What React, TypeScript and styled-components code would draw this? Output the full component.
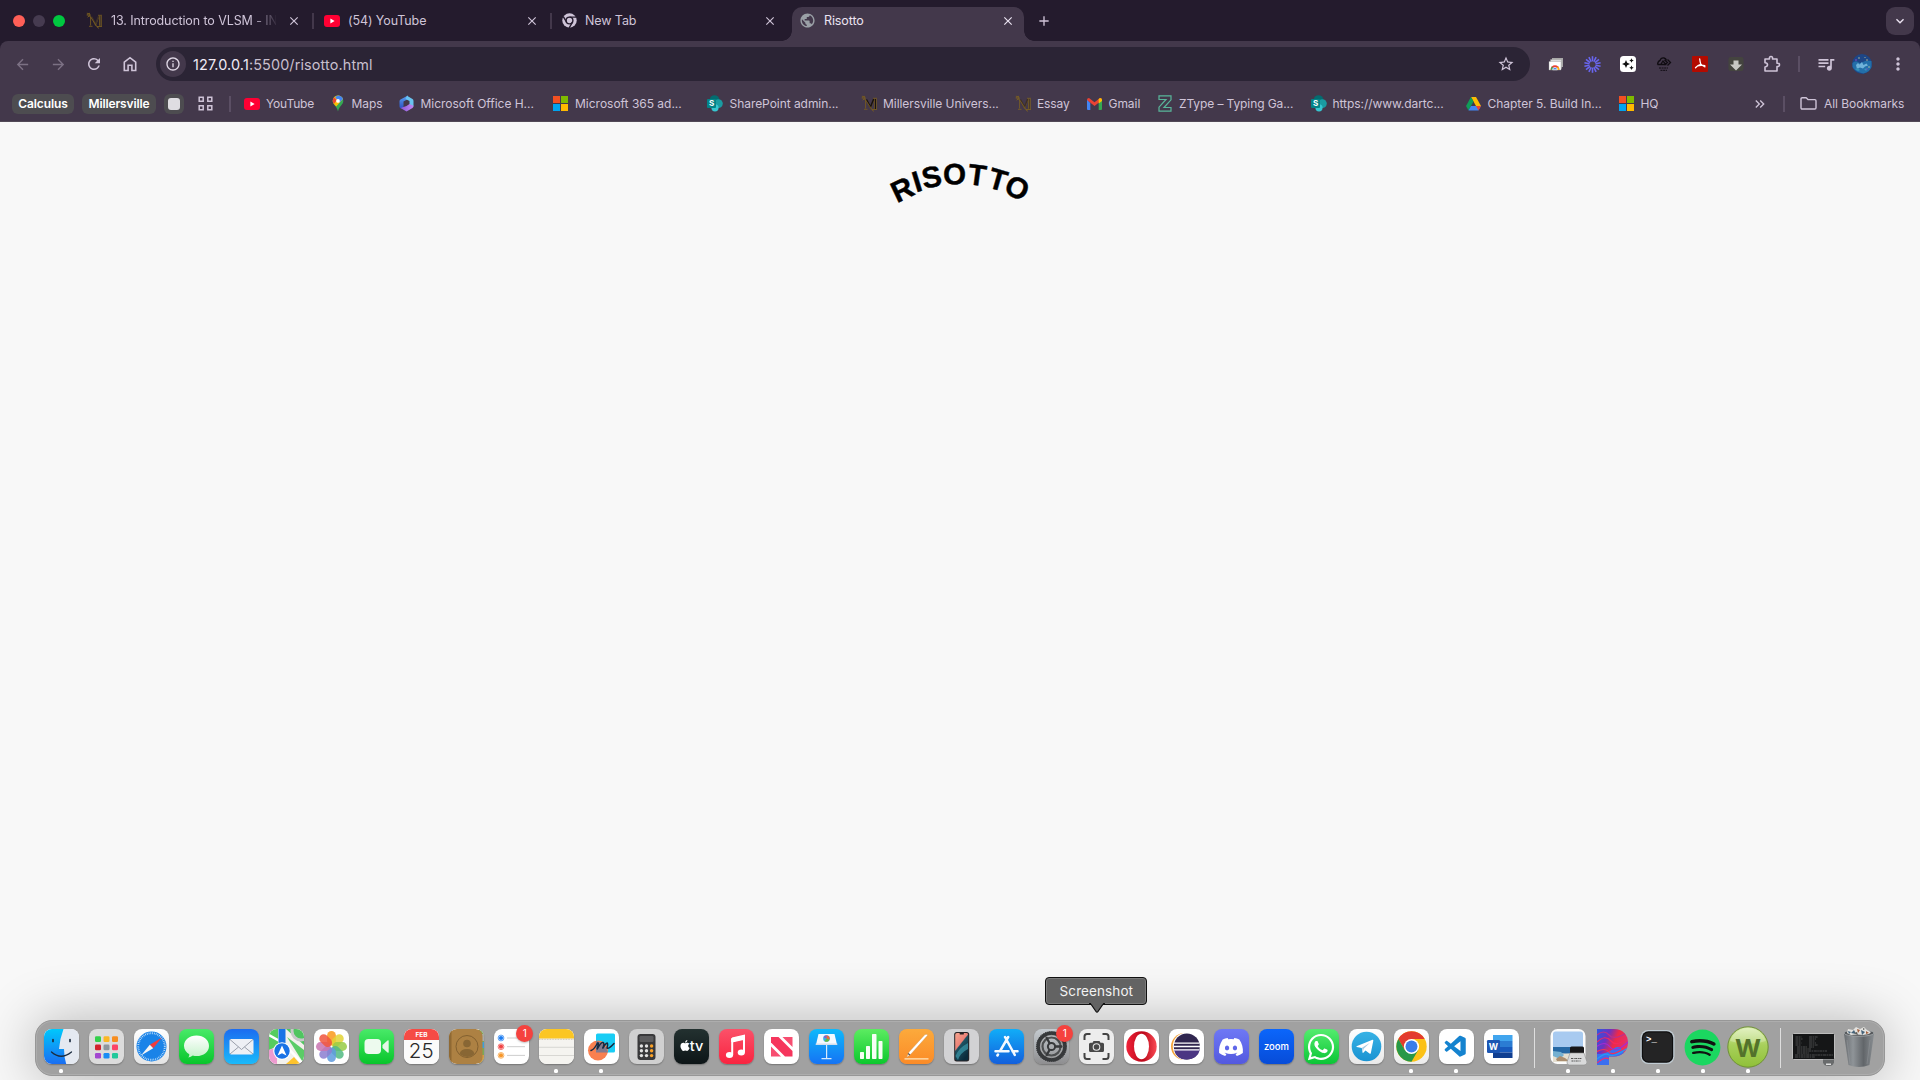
import React from "react";
import styled, { createGlobalStyle } from "styled-components";
import {
  MdArrowBack, MdArrowForward, MdRefresh, MdStarBorder,
  MdQueueMusic, MdMoreVert, MdInfoOutline, MdClose, MdAdd, MdPublic,
  MdKeyboardArrowDown, MdKeyboardDoubleArrowRight,
} from "react-icons/md";
import { FaApple, FaDiscord, FaWhatsapp, FaSpotify } from "react-icons/fa";
import { VscVscode } from "react-icons/vsc";

const Global = createGlobalStyle`
  * { box-sizing: border-box; }
  html, body { margin: 0; padding: 0; overflow: hidden; background: #f8f8f8; }
  svg { display: block; flex: none; }
`;

const Screen = styled.div`
  width: 1920px;
  height: 1080px;
  display: flex;
  flex-direction: column;
  overflow: hidden;
  background: #f8f8f8;
  font-family: Inter, "Liberation Sans", sans-serif;
`;

/* ---------- Browser chrome ---------- */
const TabStrip = styled.div`
  height: 41px;
  flex: none;
  display: flex;
  background: #241b2d;
`;
const Lights = styled.div`
  width: 75px;
  display: flex;
  align-items: center;
  gap: 8px;
  padding-left: 13px;
`;
const Light = styled.span<{ $c: string }>`
  width: 12px;
  height: 12px;
  border-radius: 50%;
  background: ${(p) => p.$c};
`;
const Tab = styled.div<{ $active?: boolean; $line?: boolean }>`
  width: ${(p) => (p.$active ? 232 : 238)}px;
  height: ${(p) => (p.$active ? 34 : 41)}px;
  margin: ${(p) => (p.$active ? "7px 3px 0 3px" : "0")};
  padding: ${(p) => (p.$active ? "0 9px 7px 7px" : "0 12px 0 11px")};
  position: relative;
  display: flex;
  align-items: center;
  gap: 8px;
  color: ${(p) => (p.$active ? "#ece4f2" : "#cfc4d8")};
  background: ${(p) => (p.$active ? "#43384b" : "transparent")};
  border-radius: 10px 10px 0 0;
  &::after {
    content: "";
    display: ${(p) => (p.$line ? "block" : "none")};
    position: absolute;
    right: -1px;
    top: 13px;
    width: 2px;
    height: 16px;
    background: #43384b;
  }
`;
const Flare = styled.i<{ $side: "left" | "right" }>`
  position: absolute;
  bottom: 0;
  ${(p) => p.$side}: -10px;
  width: 10px;
  height: 10px;
  background: radial-gradient(circle at ${(p) => (p.$side === "left" ? "0 0" : "100% 0")}, transparent 9.5px, #43384b 10px);
`;
const TabTitle = styled.span<{ $fade?: boolean }>`
  flex: 1;
  min-width: 0;
  font-size: 12.5px;
  line-height: 18px;
  letter-spacing: -0.1px;
  white-space: nowrap;
  margin-right: 3px;
  ${(p) => p.$fade && "mask-image: linear-gradient(to right, #000 140px, transparent 168px);"}
`;
const NewTab = styled.div`
  width: 34px;
  display: flex;
  align-items: center;
  justify-content: center;
  color: #cfc4d8;
`;
const TabSearch = styled.div`
  width: 28px;
  height: 28px;
  margin: 7px 6px 0 auto;
  border-radius: 9px;
  display: flex;
  align-items: center;
  justify-content: center;
  background: #43384b;
  color: #ece4f2;
`;
const ToolbarWrap = styled.div`
  flex: none;
  height: 81px;
  background: #241b2d;
`;
const ToolbarBody = styled.div`
  height: 81px;
  background: #43384b;
  border-radius: 8px 8px 0 0;
  border-bottom: 1px solid #524a57;
`;
const Toolbar = styled.div`
  height: 46px;
  display: flex;
  align-items: center;
  padding: 0 4px;
  color: #cfc4d8;
`;
const NavSlot = styled.div<{ $dim?: boolean }>`
  width: 36px;
  display: flex;
  justify-content: center;
  color: ${(p) => (p.$dim ? "#7c7184" : "#cfc4d8")};
`;
const Omnibox = styled.div`
  width: 1374px;
  height: 34px;
  margin-left: 8px;
  border-radius: 17px;
  padding: 0 15px 0 4px;
  display: flex;
  align-items: center;
  background: #2b2435;
`;
const InfoDot = styled.div`
  width: 26px;
  height: 26px;
  border-radius: 50%;
  display: flex;
  align-items: center;
  justify-content: center;
  background: #43384b;
  color: #e0d8e6;
`;
const Url = styled.div`
  flex: 1;
  margin-left: 7px;
  font-size: 14.4px;
  letter-spacing: 0.13px;
  color: #c8bfce;
  b { font-weight: 400; color: #f1ebf5; }
`;
const Extensions = styled.div`
  display: flex;
  align-items: center;
  margin-left: 8px;
`;
const VLine = styled.span<{ $w: number }>`
  width: ${(p) => p.$w}px;
  height: 16px;
  display: flex;
  justify-content: center;
  &::before { content: ""; width: 2px; height: 100%; background: #5b4f64; }
`;
const BookmarkBar = styled.div`
  height: 34px;
  display: flex;
  align-items: center;
  padding: 0 14px 1px 12px;
  color: #cfc4d8;
  font-size: 12px;
`;
const Group = styled.span<{ $w: number }>`
  width: ${(p) => p.$w}px;
  height: 20px;
  margin-right: 8px;
  border-radius: 6px;
  display: flex;
  align-items: center;
  justify-content: center;
  background: #4d4c50;
  color: #fff;
  font-size: 12px;
  font-weight: 600;
  letter-spacing: -0.12px;
`;
const Square = styled.span`
  width: 12px;
  height: 12px;
  border-radius: 3px;
  background: #dfdde2;
`;
const Bookmark = styled.span<{ $w: number }>`
  width: ${(p) => p.$w}px;
  flex: none;
  display: flex;
  align-items: center;
  white-space: nowrap;
`;
const BookmarkText = styled.span<{ $gap: number; $ls: number }>`
  margin-left: ${(p) => p.$gap}px;
  letter-spacing: ${(p) => p.$ls}px;
`;
const Overflow = styled.span`
  margin-left: auto;
  display: flex;
  align-items: center;
`;
const AllBookmarks = styled.span`
  display: flex;
  align-items: center;
  gap: 7px;
  width: 106px;
  letter-spacing: -0.06px;
  white-space: nowrap;
`;

/* ---------- Web page ---------- */
const Page = styled.main`
  flex: 1;
  display: flex;
  justify-content: center;
  align-items: flex-start;
  padding-top: 28px;
`;

/* ---------- Dock ---------- */
const Dock = styled.footer`
  flex: none;
  width: 1850px;
  height: 56px;
  margin: 0 auto 4px;
  padding: 0 3px 0 2.5px;
  display: flex;
  border-radius: 17px;
  background: #a1a1a1;
  border: 1px solid #979797;
  box-shadow: inset 0 0 0 1px #adadad, 0 2px 56px rgba(0, 0, 0, 0.29);
`;
const Slot = styled.div<{ $running?: boolean }>`
  position: relative;
  flex: 1 1 0;
  height: 54px;
  padding-top: 8px;
  display: flex;
  justify-content: center;
  align-items: flex-start;
  &::after {
    content: "";
    display: ${(p) => (p.$running ? "block" : "none")};
    position: absolute;
    bottom: 2px;
    width: 4px;
    height: 4px;
    border-radius: 1.5px;
    background: #fff;
  }
`;
const Tile = styled.div<{ $bg?: string }>`
  width: 35px;
  height: 35px;
  border-radius: 8px;
  overflow: hidden;
  display: flex;
  align-items: center;
  justify-content: center;
  color: #fff;
  background: ${(p) => p.$bg || "#fff"};
  box-shadow: 0 1px 1.5px rgba(0, 0, 0, 0.28);
`;
const Bare = styled.div`
  height: 36px;
  display: flex;
  align-items: center;
  justify-content: center;
`;
const DockLine = styled.span`
  width: 21px;
  flex: none;
  height: 40px;
  margin-top: 7px;
  display: flex;
  justify-content: center;
  &::before { content: ""; width: 1px; background: #dedede; }
`;
const Badge = styled.span`
  position: absolute;
  top: 3.500px;
  right: 0.500px;
  width: 17px;
  height: 17px;
  border-radius: 50%;
  background: #f5423e;
  color: #fff;
  font-size: 10px;
  line-height: 17px;
  text-align: center;
  box-shadow: 0 1px 2px rgba(0, 0, 0, 0.25);
`;
const Tooltip = styled.div`
  position: absolute;
  top: -44px;
  left: 50%;
  margin-left: -51px;
  width: 102px;
  height: 28px;
  border: 1px solid #111;
  border-radius: 4px;
  background: #636363;
  box-shadow: inset 0 0 0 1px #7b7b7b;
  color: #f2f2f2;
  font-size: 13.500px;
  letter-spacing: 0.1px;
  line-height: 26px;
  text-align: center;
  svg { position: absolute; left: 43px; top: 25px; }
`;

/* ---------- Small favicons ---------- */
const YouTube = () => (
  <svg width="16" height="16" viewBox="0 0 16 16"><rect y="2" width="16" height="12" rx="3" fill="#ff0033" /><path d="M6.400 5.600v4.800L10.600 8z" fill="#fff" /></svg>
);
const Marauder = ({ dark }: { dark?: boolean }) => (
  <svg width="17" height="17" viewBox="0 0 17 17" fill="none" stroke={dark ? "#7d5f1c" : "#80631f"} strokeWidth=".8">
    <path d="M4.600 5v8.500M3 14.300h3.500M6 5.500l3.500 8L13.200 3.800M13.500 4v9.800M11 14.500h5M12 3.300h4M15.300 4v10" />
    <path d="M5.500 4.500l4 7.500 3.200-8" stroke={dark ? "#17110f" : "#3d2f28"} strokeWidth="1.500" />
    <path d="M14.400 4v10" stroke={dark ? "#17110f" : "#4b3c28"} strokeWidth="1.100" />
    <path d="M.8 1.200l2.500.6 1.200 3L11.500 15.500l1.500.8M.8 3.400l3.200-2.400M1.600 5.200l3-2.400M1 2.300l2.500 2.500" />
  </svg>
);
const ChromeMono = () => (
  <svg width="15" height="15" viewBox="0 0 16 16"><circle cx="8" cy="8" r="7.700" fill="#cfc4d8" /><g stroke="#241b2d" strokeWidth="1.500" fill="none"><circle cx="8" cy="8" r="3.600" /><path d="M8 4.400h7M4.900 9.800L1.400 3.800M11.100 9.800L7.600 16" /></g></svg>
);
const MapsPin = () => (
  <svg width="12" height="17" viewBox="0 0 12 17">
    <path d="M6 .5a5.300 5.300 0 00-5.300 5.400C.7 9.700 5 11 6 16.500 7 11 11.300 9.700 11.300 5.900A5.300 5.300 0 006 .5z" fill="#34a853" />
    <path d="M6 .5a5.300 5.300 0 015 3.600L4.200 11.500 1.900 9A5.300 5.300 0 016 .5z" fill="#fbbc04" />
    <path d="M6 .5a5.300 5.300 0 015 3.600L7.500 7.500 3 2z" fill="#4285f4" />
    <path d="M2 2.500L5 5 2 8.800A5 5 0 012 2.500z" fill="#ea4335" /><circle cx="6" cy="5.900" r="1.900" fill="#fff" />
  </svg>
);
const Office = () => (
  <svg width="15" height="17" viewBox="0 0 15 17">
    <defs>
      <linearGradient id="ofa" x1="0" y1="0" x2="0" y2="1"><stop stopColor="#5aa2f4" /><stop offset="1" stopColor="#2b4fc0" /></linearGradient>
      <linearGradient id="ofb"><stop stopColor="#8a55d8" /><stop offset="1" stopColor="#c08af4" /></linearGradient>
    </defs>
    <path d="M9 .5L1.500 4.500Q.5 5 .5 6.300v5.200Q.5 13 2 13.500l2.500-1V6.500L9 4z" fill="url(#ofa)" />
    <path d="M8 .8l5.500 3.300q1 .6 1 2v5.300l-4-1.600V6L6.500 4z" fill="#69c4f0" />
    <path d="M1.500 13l6 3.500 6-3.500q1-.7 1-2.200L10.500 9 7.500 11z" fill="url(#ofb)" />
  </svg>
);
const Microsoft = () => (
  <svg width="15" height="15" viewBox="0 0 15 15"><path fill="#f25022" d="M0 0h7v7H0z" /><path fill="#7fba00" d="M8 0h7v7H8z" /><path fill="#00a4ef" d="M0 8h7v7H0z" /><path fill="#ffb900" d="M8 8h7v7H8z" /></svg>
);
const SharePoint = () => (
  <svg width="16" height="17" viewBox="0 0 16 17"><circle cx="7.500" cy="5" r="4.800" fill="#036c70" /><circle cx="11.400" cy="8.600" r="4.400" fill="#1a9ba1" /><circle cx="8" cy="12.800" r="3.600" fill="#37c6d0" /><rect y="4" width="9" height="9" rx="1" fill="#038387" /><text x="4.500" y="11.300" fontSize="8" fontWeight="700" fill="#fff" textAnchor="middle">S</text></svg>
);
const Gmail = () => (
  <svg width="15" height="12" viewBox="0 0 15 12"><path d="M0 1.500V11q0 1 1 1h2.300V5z" fill="#4285f4" /><path d="M15 1.500V11q0 1-1 1h-2.300V5z" fill="#34a853" /><path d="M0 2Q0 0 2 0l5.500 4.200L13 0q2 0 2 2L7.500 8z" fill="#ea4335" /><path d="M11.700 1L13 0q2 0 2 2v1l-3.300 2.500z" fill="#fbbc04" /></svg>
);
const ZType = () => (
  <svg width="14" height="17" viewBox="0 0 14 17" fill="none" stroke="#59b69b" strokeWidth="1.200"><path d="M1 .8h12v4L6 12.500h7v3.700H1v-4L8 4.500H1z" /></svg>
);
const Drive = () => (
  <svg width="15" height="14" viewBox="0 0 15 14"><path d="M5 0h5l5 9h-5z" fill="#fbbc04" /><path d="M5 0L0 9l2.500 4.500L7.500 4.500z" fill="#0f9d58" /><path d="M5 9h10l-2.500 4.500h-10z" fill="#4285f4" /><path d="M10 9h5l-2.500 4.500z" fill="#ea4335" /></svg>
);
const GridIcon = () => (
  <svg width="15" height="15" viewBox="0 0 15 15" fill="none" stroke="#cfc4d8" strokeWidth="1.500"><path d="M1.200 1.200h4v4h-4zM9.800 1.200h4v4h-4zM1.200 9.800h4v4h-4zM9.800 9.800h4v4h-4z" /></svg>
);
const HomeIcon = () => (
  <svg width="14" height="16" viewBox="0 0 14 16" fill="none" stroke="currentColor" strokeWidth="1.600"><path d="M1.300 6.200L7 1.700l5.700 4.500v8.300H8.900V9.300H5.100v5.200H1.300z" /></svg>
);
const PuzzleIcon = () => (
  <svg width="18" height="18" viewBox="0 0 18 18" fill="none" stroke="currentColor" strokeWidth="1.600" strokeLinejoin="round"><path d="M2 4h4.500q-.4-2.500 1.500-2.500T9.500 4H14v4.200q2.500-.2 2.500 1.600T14 11.500V16H2v-4q2.500-.4 2.500-2.200T2 7.800z" /></svg>
);
const FolderIcon = () => (
  <svg width="17" height="13" viewBox="0 0 17 13" fill="none" stroke="currentColor" strokeWidth="1.400" strokeLinejoin="round"><path d="M1 2q0-1.200 1.200-1.200h4l1.800 1.800h6.800Q16 2.600 16 3.800v7q0 1.200-1.200 1.200H2.200Q1 12 1 10.800z" /></svg>
);

const bookmarks = [
  { icon: <YouTube />, text: "YouTube", w: 87.5, gap: 6, ls: -0.15 },
  { icon: <MapsPin />, text: "Maps", w: 67.5, gap: 8, ls: -0.1 },
  { icon: <Office />, text: "Microsoft Office H...", w: 154, gap: 6.5, ls: -0.03 },
  { icon: <Microsoft />, text: "Microsoft 365 ad...", w: 154, gap: 7, ls: -0.01 },
  { icon: <SharePoint />, text: "SharePoint admin...", w: 154, gap: 6.5, ls: -0.05 },
  { icon: <Marauder dark />, text: "Millersville Univers...", w: 154, gap: 5, ls: -0.05 },
  { icon: <Marauder />, text: "Essay", w: 72, gap: 5, ls: -0.1 },
  { icon: <Gmail />, text: "Gmail", w: 71, gap: 6.5, ls: -0.05 },
  { icon: <ZType />, text: "ZType – Typing Ga...", w: 152.5, gap: 7, ls: -0.1 },
  { icon: <SharePoint />, text: "https://www.dartc...", w: 155, gap: 6, ls: -0.06 },
  { icon: <Drive />, text: "Chapter 5. Build In...", w: 153, gap: 7, ls: -0.02 },
  { icon: <Microsoft />, text: "HQ", w: 50, gap: 7, ls: -0.1 },
];

/* ---------- Extension icons ---------- */
const rays = (n: number) => Array.from({ length: n }, (_, i) => (i * 360) / n);
const CardsExt = () => (
  <svg width="16" height="16" viewBox="0 0 16 16"><path d="M4 2h11v9H4z" fill="#a9a9a9" /><path d="M2.500 3.500h11v9h-11z" fill="#dcdcdc" stroke="#999" strokeWidth=".4" /><path d="M1 5.500h12v8.500H1z" fill="#fff" stroke="#999" strokeWidth=".4" /><path d="M2.500 13.800a4.500 4.500 0 019 0z" fill="#ea4335" /><path d="M2.500 13.800l1.300-3.200 3.200 3.200z" fill="#34a853" /><path d="M11.500 13.800l-1.300-3.200L7 13.800z" fill="#fbbc04" /><path d="M4.600 13.800a2.400 2.400 0 014.800 0z" fill="#4285f4" stroke="#fff" strokeWidth=".7" /></svg>
);
const BurstExt = () => (
  <svg width="17" height="17" viewBox="-8 -8 16 16" stroke="#6966f0" strokeWidth="1.500">{rays(14).map((a) => <path key={a} d="M0-2.900V-7.800" transform={`rotate(${a})`} />)}</svg>
);
const SparkExt = () => (
  <svg width="16" height="16" viewBox="0 0 16 16"><rect width="16" height="16" rx="3.500" fill="#fff" /><path d="M6 4l1.200 2.800L10 8l-2.800 1.200L6 12 4.800 9.200 2 8l2.800-1.200zM11.500 2.300l.7 1.500 1.500.7-1.500.7-.7 1.500-.7-1.500-1.500-.7 1.500-.7zM11.500 9.500l.7 1.500 1.500.7-1.500.7-.7 1.500-.7-1.500-1.500-.7 1.500-.7z" fill="#111" /></svg>
);
const BlackExt = () => (
  <svg width="16" height="16" viewBox="0 0 16 16" fill="none" stroke="#100c12" strokeWidth="1.300"><path d="M1.500 8.500Q2 5 4 4.500 5 1.500 8 2q2 .5 2.500 2.500M1.500 8.500h9M5 8l2-3 2.500 3M8.500 4l3 2.500-3 2.500M11.500 3.500l3 3-3 3" /><path d="M3 12h9M4.500 14.300h6.500" strokeDasharray="2 .6" strokeWidth="1" /></svg>
);
const AcrobatExt = () => (
  <svg width="16" height="16" viewBox="0 0 16 16"><rect width="16" height="16" rx="1" fill="#b30b00" /><path d="M7.700 3q.4 3 1 4.800 1.600 2.200 4.300 3M8.700 8.400Q6 9 3.500 11.700M5.500 10q3-1.300 7.300-.3" fill="none" stroke="#fff" strokeWidth="1.300" strokeLinecap="round" /></svg>
);
const DownExt = () => (
  <svg width="16" height="16" viewBox="0 0 16 16"><rect x=".5" y="1" width="15" height="14" rx="2" fill="#44443f" /><path d="M5.500 4.500h5v4H14l-6 6-6-6h3.500z" fill="#c7c7c4" /></svg>
);
const AvatarPic = () => (
  <svg width="20" height="20" viewBox="0 0 20 20"><circle cx="10" cy="10" r="10" fill="#1d4686" /><path d="M.5 9q3-3 5.500-1t5 0 8.500-1v6q-2 5-8 6.500Q3 18 .5 13z" fill="#236fa9" /><path d="M4 11l2-2 1.500 1.500L10 8l1.500 3 3-1.500 1.500 2-3 1-2 2-3-1-3 1.500z" fill="#6fb3da" /><path d="M3 15l3-1 2 2-2 1zM12 15l4-1-2 3z" fill="#3392b8" /><g fill="#d5cf96"><circle cx="7" cy="4" r=".7" /><circle cx="15" cy="6" r=".7" /><circle cx="17" cy="13" r=".7" /><circle cx="13" cy="3.500" r=".5" /></g><g fill="#6a46b8"><circle cx="4" cy="6" r=".9" /><circle cx="15" cy="15" r=".8" /></g></svg>
);

/* ---------- Arched wordmark ---------- */
const arch: [string, number, number, number][] = [
  ["R", 22.2, 39.3, -25.5], ["I", 36.8, 31.5, -17], ["S", 51.5, 26.8, -10.5], ["O", 74.5, 24, -1],
  ["T", 97.3, 25, 7.5], ["T", 118, 29.5, 16], ["O", 137.3, 37.8, 25],
];
const Wordmark = () => (
  <svg width="160" height="60" viewBox="0 0 160 60" fontFamily='"Liberation Sans", Arial, sans-serif' fontWeight="700" fontSize="29.500" textAnchor="middle" stroke="#000" strokeWidth=".45">
    {arch.map(([c, x, y, r], i) => <text key={i} transform={`translate(${x} ${y}) rotate(${r})`} y="10.300">{c}</text>)}
  </svg>
);

/* ---------- Dock artwork ---------- */
const Art = ({ children }: { children: React.ReactNode }) => <svg width="35" height="35" viewBox="0 0 35 35">{children}</svg>;

const Finder = () => (
  <Art>
    <defs><linearGradient id="fi" x1="0" y1="0" x2="0" y2="1"><stop stopColor="#00c8fc" /><stop offset="1" stopColor="#1a6ef2" /></linearGradient></defs>
    <path d="M0 0h35v35H0z" fill="#e4e9f1" /><path d="M0 0h19.500Q16 9 15 20h5q0 8 2.200 15H0z" fill="url(#fi)" />
    <g fill="none" stroke="#1c2c40" strokeLinecap="round"><path d="M9 10.500v2M26 10.500v2" strokeWidth="1.700" /><path d="M7.500 23q9.500 8.500 20 0" strokeWidth="1.300" /></g>
  </Art>
);
const launchColors = ["#34d04b", "#fbb724", "#f78d1e", "#d3222c", "#8e969c", "#fc4467", "#a347d0", "#188cf5", "#21c99b"];
const Launchpad = () => <Art>{launchColors.map((c, i) => <rect key={c} x={6 + (i % 3) * 8.5} y={7.3 + Math.floor(i / 3) * 8.3} width="6" height="5.700" rx="1.300" fill={c} />)}</Art>;
const Safari = () => (
  <Art><circle cx="17.500" cy="17.500" r="15" fill="#1a83e8" /><circle cx="17.500" cy="17.500" r="13.300" fill="none" stroke="#d6ebfc" strokeWidth="1.900" strokeDasharray=".7 1.100" /><path d="M28 8.500L19.200 19.200l-3.400-3.400z" fill="#f03c3c" /><path d="M7 26.500l8.800-10.700 3.400 3.400z" fill="#f4f4f4" /></Art>
);
const Messages = () => (
  <Art><defs><linearGradient id="ms" x1="0" y1="0" x2="0" y2="1"><stop stopColor="#fff" /><stop offset="1" stopColor="#c6f2cb" /></linearGradient></defs><path d="M17.500 6.500C10.300 6.500 5 11 5 17c0 3.600 2.200 6.500 5.300 8.300q.2 1.900-1 3.200 2.600-.3 4.500-1.900 1.800.5 3.700.5C24.700 27.100 30 23 30 17S24.700 6.500 17.500 6.500z" fill="url(#ms)" /></Art>
);
const Mail = () => (
  <Art><rect x="5.500" y="10" width="24" height="15.500" rx="1.700" fill="#edf0f5" /><path d="M6 10.500l11.500 10 11.500-10M6 25l8.500-7M29 25l-8.500-7" fill="none" stroke="#9aa0ab" strokeWidth="1" /></Art>
);
const Maps = () => (
  <Art>
    <path d="M0 0h35v35H0z" fill="#f3f1ec" /><path d="M0 0h9v17L0 21z" fill="#56cc60" /><path d="M17 0h18v16z" fill="#4fc560" /><path d="M18 8l17 13v14z" fill="#5bcc66" /><path d="M0 21l8-3v17H0z" fill="#ee9bd0" /><path d="M17 35l8-7 6 7z" fill="#fdc32d" />
    <path d="M0 6l14 8 21 22" stroke="#fff" strokeWidth="2.500" fill="none" /><circle cx="32" cy="2" r="9" fill="none" stroke="#c6c8c9" strokeWidth="3" /><path d="M9.500 0h7v15h-7z" fill="#1873e6" />
    <circle cx="13" cy="22" r="8.800" fill="#fff" /><circle cx="13" cy="22" r="7.700" fill="#1972e6" /><path d="M13 16.500l4.500 10-4.500-2.300-4.500 2.300z" fill="#fff" />
  </Art>
);
const petals = ["#f99a1c", "#e2d335", "#98cc46", "#53ba83", "#5e9bde", "#8c7fd0", "#c875b1", "#f0563f"];
const Photos = () => <Art>{petals.map((c, i) => <rect key={c} x="13.100" y="2" width="8.800" height="14.500" rx="4.400" fill={c} opacity=".86" transform={`rotate(${i * 45} 17.500 17.500)`} />)}</Art>;
const FaceTime = () => (
  <Art><rect x="5.500" y="10" width="16.500" height="15" rx="4" fill="#edfaee" /><path d="M23.500 16l5-4.500q1.200-.8 1.200.5v11q0 1.300-1.200.5l-5-4.500z" fill="#e4f8e6" /></Art>
);
const Calendar = () => (
  <Art><path d="M0 0h35v35H0z" fill="#fbfbfb" /><path d="M0 0h35v11H0z" fill="#f54b45" /><text x="17.500" y="8.300" fontSize="6.500" fontWeight="700" fill="#fff" textAnchor="middle" fontFamily="Inter">FEB</text><text x="17.200" y="29" fontSize="20.500" fontWeight="300" fill="#2a2a2a" textAnchor="middle" fontFamily="Inter, sans-serif">25</text></Art>
);
const Contacts = () => (
  <Art><path d="M30 0h5v35h-5z" fill="#7ca957" /><path d="M30 13h5v6h-5z" fill="#3da0d9" /><path d="M30 5h5v7h-5z" fill="#aaa" /><path d="M30 26h5v9h-5z" fill="#d99a45" /><rect width="33.500" height="35" rx="7" fill="#ad8143" /><path d="M0 0h2.500v35H0z" fill="#8f6933" /><circle cx="18" cy="17.500" r="11" fill="none" stroke="#826030" /><circle cx="18" cy="14.500" r="3.800" fill="#886634" /><path d="M10.500 25q1-5 7.500-5t7.500 5q-7 6-15 0z" fill="#886634" /></Art>
);
const Reminders = () => (
  <Art>{["#1b7cf2", "#f04444", "#f7972a"].map((c, i) => <g key={c}><circle cx="7" cy={9 + i * 8.7} r="2.900" fill="none" stroke={c} strokeWidth=".7" /><circle cx="7" cy={9 + i * 8.7} r="2.100" fill={c} /><path d={`M13 ${9 + i * 8.7}h18`} stroke="#c7c7c7" strokeWidth=".9" /></g>)}</Art>
);
const Notes = () => <Art><path d="M0 0h35v35H0z" fill="#f5f4f0" /><path d="M0 0h35v9.500H0z" fill="#fbc623" /><path d="M0 10.300h35" stroke="#bcae8f" strokeWidth=".8" strokeDasharray=".8 .8" /><path d="M0 18.300h35M0 26.500h35" stroke="#d0cfcb" strokeWidth=".8" /></Art>;
const Freeform = () => (
  <Art><rect x="12" y="4.500" width="19" height="19" rx="1.500" fill="#18cdf5" /><circle cx="14" cy="21.500" r="10" fill="#f9804f" /><path d="M12 12q9 1 12 11.500H12z" fill="#4377b1" opacity=".65" /><path d="M7 21.500q3-1 6-6.500 1.700-2.500 1.300.5l-1.300 5q4-8 6-7t-.5 6q4-6.500 5-5.200.5 1-.5 4.700 1.500 1.500 7-4.500" fill="none" stroke="#152a42" strokeWidth="1.500" strokeLinecap="round" /></Art>
);
const Calculator = () => (
  <Art><rect x="8.500" y="5" width="18" height="26" rx="3" fill="#39393b" /><rect x="10.500" y="7" width="14" height="6" rx="1.200" fill="#5c5c5e" />{[0, 1, 2].flatMap((r) => [0, 1, 2].map((c) => <circle key={`${r}${c}`} cx={12.4 + c * 5.1} cy={17 + r * 4.8} r="1.700" fill={c === 2 ? "#fba227" : "#e1e1e1"} />))}</Art>
);
const AppleTv = () => (
  <Art><g transform="translate(4.800 10.300)"><FaApple size={12.5} color="#fff" /></g><text x="15.800" y="22" fontSize="14.500" fontWeight="500" fill="#fff" fontFamily="Inter">tv</text></Art>
);
const Music = () => <Art><path d="M13.200 9.500L25 6.800v16.500M13.200 9.500V26M13.200 12.500L25 9.800" fill="none" stroke="#fff" strokeWidth="2" /><path d="M12.200 9.200l13.800-3v4L12.200 13z" fill="#fff" /><ellipse cx="10.500" cy="26" rx="3.600" ry="2.900" fill="#fff" /><ellipse cx="22.300" cy="23.500" rx="3.600" ry="2.900" fill="#fff" /></Art>;
const News = () => <Art><path d="M7 8h7.500l14 14v5.500H21L7 13.500z" fill="#f6365d" /><path d="M18.500 8h10v10zM7 17.500v10h10z" fill="#f6365d" opacity=".88" /></Art>;
const Keynote = () => (
  <Art><path d="M9.500 5h16l2.500 10.500H7z" fill="#f4f9ff" /><path d="M6.700 14.500h21.600v1.500H6.700z" fill="#d2deec" /><path d="M17 16h1.200v13H17zM12.500 29h10v1.200h-10z" fill="#d7eafc" /><circle cx="17.500" cy="9.500" r="3.300" fill="#35b1e6" /><path d="M17.500 9.500V6.200a3.300 3.300 0 013 4.500z" fill="#ef6b35" /><path d="M17.500 9.500l3 1.200a3.300 3.300 0 01-5 1.500z" fill="#64b843" /><path d="M17.500 9.500l-3-1.300a3.300 3.300 0 013-2z" fill="#975bc0" /></Art>
);
const Numbers = () => <Art><g fill="#f6fff5"><rect x="6" y="23" width="4" height="7" rx=".7" /><rect x="12" y="17" width="4" height="13" rx=".7" /><rect x="18" y="5" width="4.500" height="25" rx=".7" /><rect x="24.500" y="12" width="4" height="18" rx=".7" /></g></Art>;
const Pages = () => <Art><path d="M26 5.500q2.500-1 2.500 1L12 25l-4.500 3.500L10 23z" fill="#fff" stroke="#c98f4d" strokeWidth=".4" /><path d="M9 24.500l2 1.500" stroke="#555" strokeWidth="1.100" /><path d="M5.500 29.800h24" stroke="#ffe7bf" strokeWidth="1.200" /></Art>;
const IPhone = () => (
  <Art><defs><linearGradient id="ip" x1="0" y1="0" x2=".6" y2="1"><stop stopColor="#f5a58f" /><stop offset=".45" stopColor="#ec8278" /><stop offset=".5" stopColor="#1e5262" /><stop offset="1" stopColor="#0b2c3c" /></linearGradient></defs><rect x="10.200" y="3" width="15" height="29.500" rx="2.500" fill="#282326" /><rect x="11.200" y="4" width="13" height="27.500" rx="1.800" fill="url(#ip)" /><path d="M11.500 27q3-8 12.500-13v6q-8 4-10 11z" fill="#378fa0" opacity=".8" /><rect x="15.500" y="4" width="4.500" height="1.500" rx=".7" fill="#222" /></Art>
);
const AppStore = () => <Art><g stroke="#f5faff" strokeWidth="2.500" strokeLinecap="round" fill="none"><path d="M16 8l9.800 18M19.200 8L11 22.200M6.500 22.200h13M23.500 22.200h5M9 25.500l-.6 1" /></g></Art>;
const Settings = () => (
  <Art><g fill="none" stroke="#37393b"><circle cx="17.500" cy="17.500" r="13.200" strokeWidth="3.800" /><circle cx="17.500" cy="17.500" r="14.800" strokeWidth="1.500" strokeDasharray="1 .9" /><circle cx="17.500" cy="17.500" r="9" strokeWidth="2.200" stroke="#4d4f50" /><circle cx="17.500" cy="17.500" r="3.600" strokeWidth="2" /><path d="M20.800 17.500h9M15.800 20.500l-4.500 8M15.800 14.500l-4.500-8" strokeWidth="2.300" /></g><circle cx="17.500" cy="17.500" r="11.200" fill="none" stroke="#a6a7a8" strokeWidth=".7" /></Art>
);
const Shot = () => (
  <Art><path d="M5.500 11V7.500q0-2.500 2.500-2.500h3.500M23.500 5H27q2.500 0 2.500 2.500V11M29.500 24v3.500q0 2.500-2.500 2.500h-3.500M11.500 30H8q-2.500 0-2.500-2.500V24" fill="none" stroke="#424242" strokeWidth="2" /><path d="M14.500 12h6l1 1.700h2q1.500 0 1.500 1.500v6.300q0 1.500-1.500 1.500h-12q-1.500 0-1.500-1.500v-6.300q0-1.500 1.500-1.500h2z" fill="#484848" /><circle cx="17.500" cy="18" r="3.300" fill="none" stroke="#e5e5e5" strokeWidth="1.100" /></Art>
);
const Opera = () => <Art><defs><linearGradient id="op"><stop stopColor="#f02239" /><stop offset=".55" stopColor="#ba0719" /><stop offset="1" stopColor="#fb4b55" /></linearGradient></defs><circle cx="17.500" cy="17.500" r="15.200" fill="url(#op)" /><ellipse cx="17.500" cy="17.500" rx="7.500" ry="12.800" fill="#fff" /></Art>;
const Eclipse = () => <Art><circle cx="15.500" cy="17.500" r="13.500" fill="#f5a43a" /><circle cx="17.800" cy="17.500" r="14" fill="#fff" /><circle cx="17.800" cy="17.500" r="13" fill="#30264f" /><path d="M5 20.500h26q-2.500 9.500-13 10t-13-10z" fill="#4c3683" /><path d="M5 14.100h25.500M4.500 17.500h26.500M5 20.900h25.500" stroke="#fff" strokeWidth="1.400" /></Art>;
const Telegram = () => <Art><defs><linearGradient id="tg" x1="0" y1="0" x2="0" y2="1"><stop stopColor="#37b2e5" /><stop offset="1" stopColor="#1a93d2" /></linearGradient></defs><circle cx="17.500" cy="17.500" r="14.800" fill="url(#tg)" /><path d="M7.500 17.300L23.500 10.700q1-.2.800 1l-2.500 12.500q-.4 1-1.300.4l-4-3-2.200 2.200q-.7.5-.8-.5l-.7-4.300-5-1q-.8-.4-.3-.7z" fill="#fff" /><path d="M13 18.800l8-5-6.300 6-.9 3.300z" fill="#a9cbe2" /></Art>;
const Chrome = () => (
  <Art><g transform="translate(17.500 17.500)"><circle r="15.200" fill="#fbc116" /><path d="M-13.160-7.600A15.200 15.200 0 0113.160-7.600H0L-6.600 3.800z" fill="#e33b2e" /><path d="M-13.160-7.600A15.200 15.200 0 000 15.200L6.600 3.800-6.600 3.800z" fill="#279847" /><circle r="7.600" fill="#fff" /><circle r="6" fill="#3a7de8" /></g></Art>
);
const Word = () => <Art><path d="M9 6h19.500v6H9z" fill="#41a5ee" /><path d="M9 12h19.500v6H9z" fill="#2b7cd3" /><path d="M9 18h19.500v5.500H9z" fill="#185abd" /><path d="M9 23.500h19.500V29H9z" fill="#103f91" /><rect x="3" y="11" width="13" height="13" rx="1.200" fill="#1c56b3" /><text x="9.500" y="21" fontSize="9" fontWeight="700" fill="#fff" textAnchor="middle" fontFamily="Inter">W</text></Art>;
const Preview = () => (
  <svg width="38" height="38" viewBox="0 0 38 38"><rect x="1.500" y="1" width="35" height="35" rx="7" fill="#fbfbfb" /><path d="M4 6q0-2.500 2.500-2.500h25Q34 3.500 34 6v15H4z" fill="#a8caf0" /><path d="M4 19h30v8H4z" fill="#2769a5" /><path d="M4 24q10 3 30 0v10H4z" fill="#e5dfd1" /><path d="M4 23l8 1 3 3-4 4-7-3z" fill="#75b0d1" /><path d="M7 31l4-3 5 2 4 3H8z" fill="#aa8e70" /><path d="M21 20q0-1.500 1.500-1.500h11Q35 18.500 35 20v5H21z" fill="#171719" /><path d="M21 25h14l3 9q0 3-3 3H20.500q-3 0-2.500-3z" fill="#d9dadb" stroke="#8d8e8f" strokeWidth=".6" /><path d="M22 30.500h11M22.500 33h9" stroke="#555" strokeWidth="1.100" strokeDasharray="2 .7 1 .5" /></svg>
);
const Pandora = () => (
  <svg width="31" height="36" viewBox="0 0 31 36"><defs><linearGradient id="pd" x1="0" y1="0" x2="1" y2=".5"><stop stopColor="#2c5ae0" /><stop offset=".35" stopColor="#6b32c2" /><stop offset=".6" stopColor="#ef2947" /><stop offset="1" stopColor="#dc3377" /></linearGradient><clipPath id="pc"><path d="M0 0h17c9 0 14 6 14 13.500C31 22 25 27.500 17 27.500h-5V36H0z" /></clipPath></defs><g clipPath="url(#pc)"><path d="M0 0h31v36H0z" fill="url(#pd)" /><path d="M0 36V25q10 0 16-5t10 2 5 14z" fill="#3a6ff0" /><g fill="none" strokeWidth="1.200"><path d="M0 13q8-8 14-1t18-5" stroke="#f5295b" /><path d="M-1 18q9-7 14 0t18-5" stroke="#a42bd2" /><path d="M-1 23q9-5 13 0t18-6" stroke="#f43253" /><path d="M0 30q8-7 12-4T31 19" stroke="#259cf4" /><path d="M0 6Q7 0 12 6t19-3" stroke="#b9308d" /><path d="M0 34q8-7 12-4" stroke="#e72f78" /></g></g></svg>
);
const Terminal = () => (
  <svg width="36" height="36" viewBox="0 0 36 36"><rect x=".5" y="1" width="34" height="34" rx="7.500" fill="#c0cbd2" /><rect x="1.800" y="2.300" width="31.400" height="31.400" rx="6.500" fill="#0e0e0f" /><rect x="3" y="3.500" width="29" height="29" rx="5.500" fill="#242425" /><text x="6" y="13" fontSize="9" fontWeight="700" fill="#fff" fontFamily="Liberation Mono, monospace">&gt;_</text></svg>
);
const Webster = () => (
  <svg width="42" height="42" viewBox="0 0 42 42"><defs><linearGradient id="wb" x1="0" y1="0" x2="0" y2="1"><stop stopColor="#dbeeb0" /><stop offset=".45" stopColor="#a8d05b" /><stop offset="1" stopColor="#8fc038" /></linearGradient></defs><circle cx="21" cy="21" r="20.200" fill="url(#wb)" stroke="#6e8f36" strokeWidth="1" /><path d="M3 15a19 19 0 0136 0q-18 6-36 0z" fill="#fff" opacity=".25" /><text x="21" y="31" fontSize="24" fontWeight="700" fill="#53722b" textAnchor="middle" fontFamily="Inter" textLength="26" lengthAdjust="spacingAndGlyphs">W</text></svg>
);
const Win = () => (
  <svg width="43" height="38" viewBox="0 0 43 38"><rect x=".5" y="5.500" width="42" height="26" rx="1" fill="#151617" stroke="#bdbdbd" strokeWidth="1" /><g stroke="#747474" strokeWidth=".6" strokeDasharray="3 .5 1.500 .6"><path d="M3.500 9h6M17 9h9M3.500 11h7M17 11h7M3.500 13h5M17 13h6M3.500 15h6M17 15h7M3.500 17h5M17 17h9M5 19h10M17 19h5M5 21h14M5 23h30M5 25h12M3 27h38M3 29h20" /></g><path d="M31 31.500h11v3q-1 3.500-5.500 3.500T31 34.500z" fill="#696b6c" /><path d="M34 36.200h5" stroke="#fff" strokeWidth="1.200" /></svg>
);
const Trash = () => (
  <svg width="32" height="42" viewBox="0 0 32 42"><defs><linearGradient id="tr"><stop stopColor="#686c70" /><stop offset=".3" stopColor="#8f9498" /><stop offset=".65" stopColor="#62666a" /><stop offset="1" stopColor="#888d91" /></linearGradient></defs><path d="M1 8h30l-4.500 31q-10.500 4-21 0z" fill="url(#tr)" /><ellipse cx="16" cy="7" rx="15" ry="3.300" fill="#55585b" stroke="#a5a8ab" strokeWidth=".8" /><path d="M4 7l1-4 5 1 3-3 4 2 4-2 3 3 4 2-2 2-6 1-6-.5-6 .5z" fill="#e3e2df" /><path d="M8 7l3-3 2 4zM18 4l4 2-3 3zM5 5l3 1-2 2z" fill="#46647b" /><path d="M14 3l3 1-2 3zM23 5l3 2-3 1z" fill="#a3613f" /><path d="M11 7l3-1 1 3zM20 2l2 1-2 1z" fill="#5c5c58" /><path d="M4 14l3 24M27 14l-3 24" stroke="#aaaeb2" strokeWidth=".7" opacity=".4" /></svg>
);
const Spotify = () => (
  <svg width="37" height="37" viewBox="0 0 37 37"><circle cx="18.500" cy="18.500" r="14" fill="#111" /><FaSpotify size={37} color="#1bd760" /></svg>
);

type App = { art: React.ReactNode; bg?: string; bare?: boolean; running?: boolean; badge?: boolean; tip?: string };
const GREEN = "linear-gradient(#48ea68, #08c52b)";
const apps: App[] = [
  { art: <Finder />, running: true },
  { art: <Launchpad />, bg: "#dcdcdc" },
  { art: <Safari />, bg: "linear-gradient(#fff, #e4e4e4)" },
  { art: <Messages />, bg: GREEN },
  { art: <Mail />, bg: "linear-gradient(#1b6cf0, #1abafa)" },
  { art: <Maps /> },
  { art: <Photos /> },
  { art: <FaceTime />, bg: GREEN },
  { art: <Calendar /> },
  { art: <Contacts /> },
  { art: <Reminders />, badge: true },
  { art: <Notes />, running: true },
  { art: <Freeform />, running: true },
  { art: <Calculator />, bg: "#d0d0d0" },
  { art: <AppleTv />, bg: "linear-gradient(#233130, #0d1517)" },
  { art: <Music />, bg: "linear-gradient(#fb5169, #f92440)" },
  { art: <News /> },
  { art: <Keynote />, bg: "linear-gradient(#0fb9fb, #1573f4)" },
  { art: <Numbers />, bg: "linear-gradient(#5cec61, #0bc82d)" },
  { art: <Pages />, bg: "linear-gradient(#fcaa3c, #fb8b27)" },
  { art: <IPhone />, bg: "#d2d2d4" },
  { art: <AppStore />, bg: "linear-gradient(#11adf8, #135fdc)" },
  { art: <Settings />, bg: "linear-gradient(#c5cbd0, #8e8e90)", badge: true },
  { art: <Shot />, bg: "#ededed", tip: "Screenshot" },
  { art: <Opera /> },
  { art: <Eclipse /> },
  { art: <FaDiscord size={26} />, bg: "linear-gradient(#6e78f5, #5359df)" },
  { art: <Art><text x="17.500" y="20.500" fontSize="9.500" fontWeight="500" fill="#fff" textAnchor="middle" fontFamily="Inter" textLength="25">zoom</text></Art>, bg: "linear-gradient(#0b66fb, #074cd8)" },
  { art: <FaWhatsapp size={30} />, bg: "linear-gradient(#54ec6e, #0bc536)" },
  { art: <Telegram />, bg: "linear-gradient(#fff, #e9e9e9)" },
  { art: <Chrome />, bg: "linear-gradient(#fff, #ececec)", running: true },
  { art: <VscVscode size={26} color="#1583cf" />, running: true },
  { art: <Word /> },
];
const recents: App[] = [
  { art: <Preview />, bare: true, running: true },
  { art: <Pandora />, bare: true, running: true },
  { art: <Terminal />, bare: true, running: true },
  { art: <Spotify />, bare: true, running: true },
  { art: <Webster />, bare: true, running: true },
];

const DockItem = ({ app }: { app: App }) => (
  <Slot $running={app.running}>
    {app.bare ? <Bare>{app.art}</Bare> : <Tile $bg={app.bg}>{app.art}</Tile>}
    {app.badge && <Badge>1</Badge>}
    {app.tip && (
      <Tooltip>
        {app.tip}
        <svg width="16" height="11" viewBox="0 0 16 11"><path d="M0 0.500h1.500L7 8.500q1 1.500 2 0L14.500.5H16" fill="#636363" stroke="#111" strokeWidth="1.200" /><path d="M2.500 0h11v1.300h-11z" fill="#636363" /></svg>
      </Tooltip>
    )}
  </Slot>
);

export default function App() {
  return (
    <Screen>
      <Global />
      <TabStrip>
        <Lights><Light $c="#ff5f57" /><Light $c="#463b50" /><Light $c="#00c840" /></Lights>
        <Tab $line><Marauder /><TabTitle $fade>13. Introduction to VLSM - INT</TabTitle><MdClose size={14} /></Tab>
        <Tab $line><YouTube /><TabTitle>(54) YouTube</TabTitle><MdClose size={14} /></Tab>
        <Tab><ChromeMono /><TabTitle>New Tab</TabTitle><MdClose size={14} /></Tab>
        <Tab $active><Flare $side="left" /><MdPublic size={17} color="#9aa0a6" /><TabTitle>Risotto</TabTitle><MdClose size={14} /><Flare $side="right" /></Tab>
        <NewTab><MdAdd size={16} /></NewTab>
        <TabSearch><MdKeyboardArrowDown size={16} /></TabSearch>
      </TabStrip>
      <ToolbarWrap>
        <ToolbarBody>
          <Toolbar>
            <NavSlot $dim><MdArrowBack size={17} /></NavSlot>
            <NavSlot $dim><MdArrowForward size={17} /></NavSlot>
            <NavSlot><MdRefresh size={18} /></NavSlot>
            <NavSlot><HomeIcon /></NavSlot>
            <Omnibox>
              <InfoDot><MdInfoOutline size={16} /></InfoDot>
              <Url><b>127.0.0.1</b>:5500/risotto.html</Url>
              <MdStarBorder size={18} />
            </Omnibox>
            <Extensions>
              <NavSlot><CardsExt /></NavSlot>
              <NavSlot><BurstExt /></NavSlot>
              <NavSlot><SparkExt /></NavSlot>
              <NavSlot><BlackExt /></NavSlot>
              <NavSlot><AcrobatExt /></NavSlot>
              <NavSlot><DownExt /></NavSlot>
              <NavSlot><PuzzleIcon /></NavSlot>
              <VLine $w={18} />
              <NavSlot><MdQueueMusic size={20} /></NavSlot>
              <NavSlot><AvatarPic /></NavSlot>
              <NavSlot><MdMoreVert size={20} /></NavSlot>
            </Extensions>
          </Toolbar>
          <BookmarkBar>
            <Group $w={62}>Calculus</Group>
            <Group $w={74}>Millersville</Group>
            <Group $w={20}><Square /></Group>
            <Bookmark $w={24}><BookmarkText $gap={6} $ls={0}><GridIcon /></BookmarkText></Bookmark>
            <VLine $w={28} />
            {bookmarks.map((b, i) => (
              <Bookmark key={i} $w={b.w}>{b.icon}<BookmarkText $gap={b.gap} $ls={b.ls}>{b.text}</BookmarkText></Bookmark>
            ))}
            <Overflow>
              <MdKeyboardDoubleArrowRight size={16} />
              <VLine $w={32} />
              <AllBookmarks><FolderIcon />All Bookmarks</AllBookmarks>
            </Overflow>
          </BookmarkBar>
        </ToolbarBody>
      </ToolbarWrap>
      <Page><Wordmark /></Page>
      <Dock>
        {apps.map((a, i) => <DockItem key={i} app={a} />)}
        <DockLine />
        {recents.map((a, i) => <DockItem key={i} app={a} />)}
        <DockLine />
        <DockItem app={{ art: <Win />, bare: true }} />
        <DockItem app={{ art: <Trash />, bare: true }} />
      </Dock>
    </Screen>
  );
}
